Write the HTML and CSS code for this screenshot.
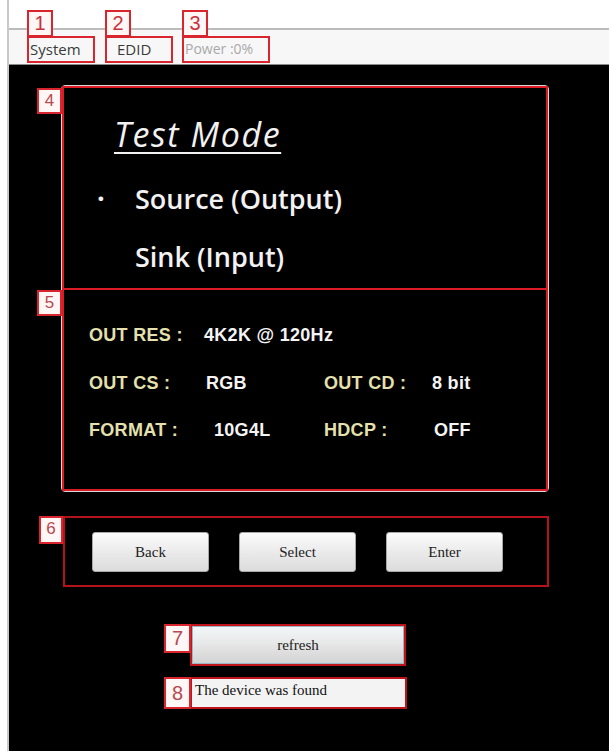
FILE: index.html
```html
<!DOCTYPE html>
<html>
<head>
<meta charset="utf-8">
<link rel="stylesheet" href="styles.css">
</head>
<body>
<div class="window">
  <div class="tabbar">
    <div class="tab ann"><span class="badge badge-top">1</span>System</div>
    <div class="tab ann"><span class="badge badge-top">2</span>EDID</div>
    <div class="tab tab-power ann"><span class="badge badge-top">3</span>Power :0%</div>
  </div>
  <div class="screen">
    <div class="frame">
      <div class="panel panel-mode">
        <span class="badge badge-side">4</span>
        <div class="mode-title">Test Mode</div>
        <div class="mode-item mode-src"><span class="bullet">·</span>Source (Output)</div>
        <div class="mode-item">Sink (Input)</div>
      </div>
      <div class="panel panel-info">
        <span class="badge badge-side">5</span>
        <div class="info-row">
          <span class="lbl">OUT RES :</span><span class="val">4K2K @ 120Hz</span>
        </div>
        <div class="info-row">
          <span class="lbl">OUT CS :</span><span class="val val-rgb">RGB</span>
          <span class="lbl">OUT CD :</span><span class="val">8 bit</span>
        </div>
        <div class="info-row">
          <span class="lbl">FORMAT :</span><span class="val val-fmt">10G4L</span>
          <span class="lbl">HDCP :</span><span class="val val-off">OFF</span>
        </div>
      </div>
    </div>
    <div class="keys">
      <span class="badge badge-side badge-six">6</span>
      <button class="btn">Back</button>
      <button class="btn">Select</button>
      <button class="btn">Enter</button>
    </div>
    <div class="refresh-box">
      <span class="badge badge-side badge-low">7</span>
      <button class="btn btn-refresh">refresh</button>
    </div>
    <div class="status-box">
      <span class="badge badge-side badge-low">8</span>
      <div class="status">The device was found</div>
    </div>
  </div>
</div>
</body>
</html>
```
FILE: styles.css
```css
* { box-sizing: border-box; }
html, body { margin: 0; padding: 0; }
body {
  background: #ffffff;
  width: 609px;
  height: 751px;
  overflow: hidden;
  font-family: "Open Sans", "Noto Sans", sans-serif;
}
.window {
  margin-left: 7px;
  padding-top: 28px;
  height: 751px;
  border-left: 2px solid #c9c9c9;
  display: flex;
  flex-direction: column;
}
.tabbar {
  height: 37px;
  border-top: 2px solid #bcbcbc;
  border-bottom: 1px solid #8a8a8a;
  background: #f7f7f7;
  display: flex;
  gap: 10px;
  padding: 6px 0 0 18px;
}
.ann { position: relative; }
.tab {
  width: 68px;
  height: 27px;
  border: 2px solid #d9262e;
  font-size: 15px;
  color: #3a3a3a;
  padding-left: 1px;
  line-height: 22px;
}
.tab:nth-child(2) { padding-left: 10px; }
.tab-power {
  width: 88px;
  color: #a9a9a9;
  margin-left: -1px;
  font-size: 14px;
}
.badge {
  position: absolute;
  width: 26px;
  height: 27px;
  border: 2px solid #d9262e;
  background: #fff6f6;
  color: #c8323c;
  font-family: "Liberation Sans", sans-serif;
  font-size: 20px;
  line-height: 23px;
  text-align: center;
}
.badge-top { left: -2px; top: -28px; }
.screen {
  flex: 1;
  background: #000;
  padding: 20px 0 0 52px;
}
.frame {
  width: 488px;
  border: 1px solid #d8d8d8;
  border-radius: 4px;
}
.panel {
  position: relative;
  border: 2px solid #dc1c24;
  background: #000;
}
.badge-side {
  left: -27px;
  top: 0px;
  width: 25px;
  height: 26px;
  font-size: 17px;
  line-height: 22px;
  color: #b8494f;
}
.panel-mode {
  height: 204px;
  padding: 26px 0 0 49px;
  color: #f2f2f2;
}
.mode-title {
  font-style: italic;
  font-weight: 500;
  font-size: 34px;
  letter-spacing: 1.6px;
  text-decoration: underline;
  text-decoration-thickness: 2px;
  text-underline-offset: 5px;
  line-height: 40px;
  padding-left: 1px;
  margin-bottom: 27px;
}
.mode-item {
  font-size: 27px;
  font-weight: 600;
  line-height: 36px;
  padding-left: 22px;
  position: relative;
}
.mode-src { margin-bottom: 22px; }
.bullet {
  position: absolute;
  left: -16px;
  top: -1px;
  font-weight: bold;
}
.panel-info {
  height: 203px;
  margin-top: -2px;
  padding: 33px 0 0 25px;
}
.info-row {
  display: grid;
  grid-template-columns: 115px 120px 108px auto;
  font-family: "Liberation Sans", sans-serif;
  font-weight: 700;
  font-size: 18px;
  line-height: 24px;
  height: 47.5px;
  letter-spacing: 0.3px;
  white-space: nowrap;
}
.lbl { color: #e4e1ae; }
.val { color: #f4f4f4; }
.val-rgb { padding-left: 2px; }
.val-fmt { padding-left: 10px; }
.val-off { padding-left: 2px; }
.keys {
  position: relative;
  width: 486px;
  height: 71px;
  margin: 24px 0 0 2px;
  border: 2px solid #b3141b;
  display: flex;
  gap: 30px;
  padding: 14px 0 0 27px;
}
.badge-six { left: -26px; top: -2px; height: 28px; width: 24px; }
.btn {
  width: 117px;
  height: 40px;
  border: 1px solid #a8a8a8;
  border-radius: 3px;
  background: linear-gradient(#fbfbfb, #e9e9e9 55%, #dcdcdc);
  font-family: "Liberation Serif", serif;
  font-size: 15px;
  color: #222;
  padding: 0;
}
.refresh-box {
  position: relative;
  width: 216px;
  margin: 37px 0 0 129px;
  border: 2px solid #c0141c;
}
.btn-refresh {
  display: block;
  width: 212px;
  height: 38px;
  border-radius: 0;
  border: 1px solid #9bb7c4;
  background: linear-gradient(#f2f7f9, #e6e6e6 50%, #d3d3d3);
}
.badge-low { left: -28px; top: -2px; width: 27px; height: 29px; font-size: 20px; line-height: 25px; }
.status-box {
  position: relative;
  width: 217px;
  margin: 11px 0 0 129px;
  border: 2px solid #c0141c;
}
.status {
  height: 28px;
  background: #f3f3f3;
  font-family: "Liberation Serif", serif;
  font-size: 15px;
  color: #111;
  padding: 3px 0 0 3px;
}
.status-box .badge-low { height: 32px; line-height: 28px; }
```
